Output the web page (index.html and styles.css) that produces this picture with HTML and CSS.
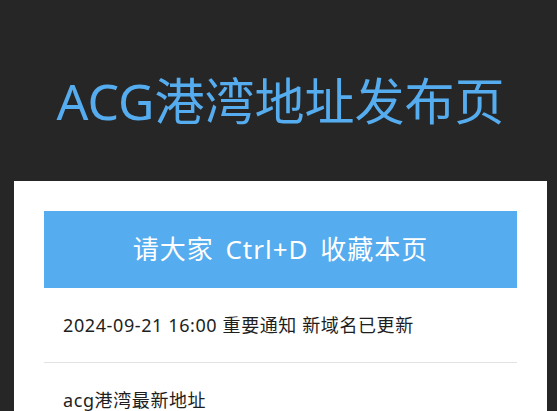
FILE: index.html
```html
<!DOCTYPE html>
<html lang="zh-CN">
<head>
<meta charset="utf-8">
<title>ACG港湾地址发布页</title>
<link rel="stylesheet" href="styles.css">
</head>
<body>
<div class="page">
  <header class="hero">
    <h1 class="hero-title">ACG港湾地址发布页</h1>
  </header>
  <main class="panel">
    <div class="notice">请大家 Ctrl+D 收藏本页</div>
    <ul class="list">
      <li class="list-item">2024-09-21 16:00 重要通知 新域名已更新</li>
      <li class="list-item">acg港湾最新地址</li>
    </ul>
  </main>
</div>
</body>
</html>
```
FILE: styles.css
```css
html, body {
  margin: 0;
  padding: 0;
  background: #262626;
}
body {
  font-family: "Noto Sans", "Noto Sans CJK SC", sans-serif;
  color: #1e1e1e;
}
.page {
  margin: 0 10px 0 14px;
}
.hero {
  padding: 71px 0 50px;
}
.hero-title {
  margin: 0;
  font-size: 50px;
  line-height: 60px;
  font-weight: 400;
  color: #55acee;
  text-align: center;
}
.panel {
  background: #fff;
  padding: 30px 30px 40px;
}
.notice {
  background: #55acee;
  color: #fff;
  text-align: center;
  font-size: 26px;
  letter-spacing: 1px;
  word-spacing: 4px;
  height: 77px;
  line-height: 77px;
}
.list {
  list-style: none;
  margin: 0;
  padding: 0;
}
.list-item {
  font-size: 18px;
  letter-spacing: 0.6px;
  line-height: 26px;
  padding: 24px 19px;
  border-bottom: 1px solid #e2e2e2;
}
```
